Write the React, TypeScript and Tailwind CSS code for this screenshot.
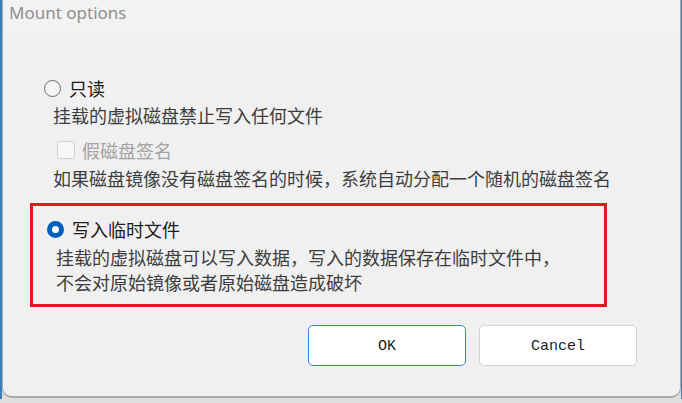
const cjk = { fontFamily: '"Noto Sans CJK SC", "Noto Sans", sans-serif' };

function Radio({ checked }: { checked?: boolean }) {
  if (checked) {
    return (
      <span className="flex h-[17px] w-[17px] shrink-0 items-center justify-center rounded-full bg-[#005fb8]">
        <span className="h-[7px] w-[7px] rounded-full bg-white" />
      </span>
    );
  }
  return <span className="block h-[17px] w-[17px] shrink-0 rounded-full border-[1.5px] border-[#6a6a6a] bg-[#f5f5f5]" />;
}

function Desc({ children }: { children: React.ReactNode }) {
  return <div className="flex h-[25px] items-center text-[18px] text-[#3d3d3d]">{children}</div>;
}

export default function App() {
  return (
    <div className="flex h-[403px] w-[682px] bg-[#dedede]" style={cjk}>
      <div className="h-[399px] w-[2px] bg-[#3f7fb8]" />
      <div className="flex h-[398px] w-[679px] flex-col rounded-bl-[10px] rounded-br-[10px] border-b-2 border-l border-r border-[#a9a9a9] bg-[#f0f0f0]">
        {/* title bar */}
        <div className="flex h-[33px] items-start bg-[#f3f3f3] pl-[6px]">
          <span className="text-[17px] text-[#8f8f8f]" style={{ fontFamily: '"Noto Sans", sans-serif' }}>
            Mount options
          </span>
        </div>

        <div className="flex flex-col pl-[41px] pt-[42px]">
          <label className="flex h-[26px] items-center gap-[8px]">
            <Radio />
            <span className="text-[18px] text-[#1b1b1b]">只读</span>
          </label>
          <div className="mt-[2px] pl-[9px]">
            <Desc>挂载的虚拟磁盘禁止写入任何文件</Desc>
          </div>
          <label className="mt-[9px] flex h-[26px] items-center gap-[7px] pl-[13px]">
            <span className="block h-[18px] w-[18px] shrink-0 rounded-[3px] border border-[#cfcfcf] bg-[#f7f7f7]" />
            <span className="text-[18px] text-[#a3a3a3]">假磁盘签名</span>
          </label>
          <div className="mt-[3px] pl-[9px]">
            <Desc>如果磁盘镜像没有磁盘签名的时候，系统自动分配一个随机的磁盘签名</Desc>
          </div>
        </div>

        <div className="ml-[27px] mt-[12px] flex h-[104px] w-[577px] flex-col border-[3px] border-[#e8141f] pl-[14px] pt-[10px]">
          <label className="flex h-[26px] items-center gap-[8px]">
            <Radio checked />
            <span className="text-[18px] text-[#1b1b1b]">写入临时文件</span>
          </label>
          <div className="mt-[3px] pl-[9px]">
            <Desc>挂载的虚拟磁盘可以写入数据，写入的数据保存在临时文件中，</Desc>
            <Desc>不会对原始镜像或者原始磁盘造成破坏</Desc>
          </div>
        </div>

        <div
          className="mt-[18px] flex justify-end gap-[13px] pr-[43px] text-[15px] text-[#1b1b1b]"
          style={{ fontFamily: '"Liberation Mono", monospace' }}
        >
          <button className="h-[41px] w-[158px] rounded-[5px] border border-[#3a86d6] bg-white pt-[3px]">OK</button>
          <button className="h-[41px] w-[158px] rounded-[5px] border border-[#d4d4d4] bg-white pt-[3px]">Cancel</button>
        </div>
      </div>
      <div className="h-[399px] w-[1px] bg-[#3f7fb8]" />
    </div>
  );
}
